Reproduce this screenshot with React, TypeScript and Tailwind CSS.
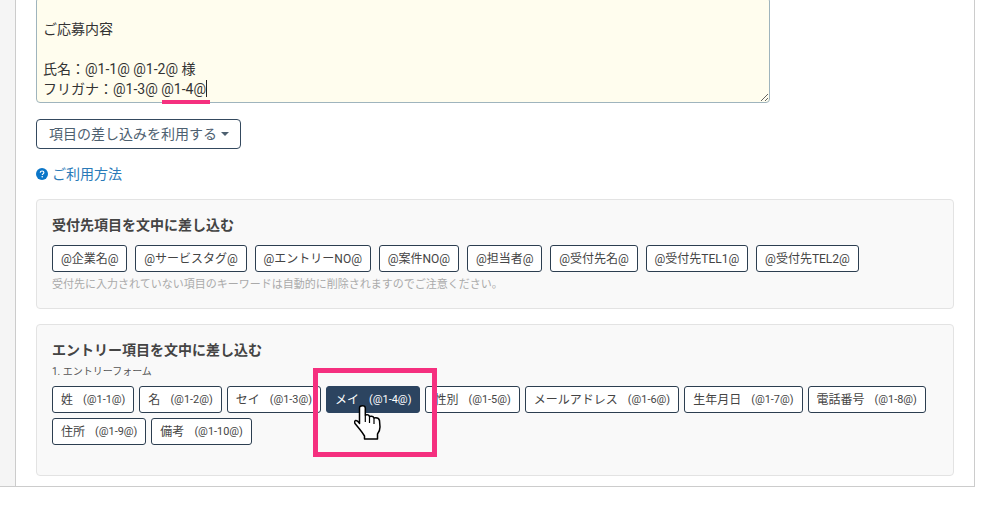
import React from "react";

const font = { fontFamily: '"Roboto","Noto Sans CJK JP",sans-serif' };

const tags = ["@企業名@", "@サービスタグ@", "@エントリーNO@", "@案件NO@", "@担当者@", "@受付先名@", "@受付先TEL1@", "@受付先TEL2@"];
const items: [string, string][] = [
  ["姓", "(@1-1@)"],
  ["名", "(@1-2@)"],
  ["セイ", "(@1-3@)"],
  ["メイ", "(@1-4@)"],
  ["性別", "(@1-5@)"],
  ["メールアドレス", "(@1-6@)"],
  ["生年月日", "(@1-7@)"],
  ["電話番号", "(@1-8@)"],
  ["住所", "(@1-9@)"],
  ["備考", "(@1-10@)"],
];

function Hand() {
  return (
    <svg viewBox="0 0 27 35" className="absolute left-[354px] top-[405px] w-[27px] h-[35px]">
      <path
        d="M5.500 3Q5.500 .8 8.300 .8Q11.300 .8 11.300 3V10Q14.800 9 15.500 11.500Q19 10.500 20 13Q24.500 12 25.500 15.500L26 22Q26 26 23.500 29V34H10.500V31Q8 27 5.500 24L1 18.500Q0 16.500 1.500 15.500Q3.500 15 5.500 18.500Z"
        fill="#fff"
        stroke="#000"
        strokeWidth="1.500"
        strokeLinejoin="round"
      />
      <path d="M11.300 10V17M15.500 11.500V18M20 13V19" stroke="#000" strokeWidth="1.200" fill="none" />
    </svg>
  );
}

export default function App() {
  return (
    <div className="relative w-[990px] h-[505px] overflow-hidden bg-white text-[#333]" style={font}>
      <div className="flex w-[975px] h-[487px] border-b border-[#cccccc]">
        <div className="w-[15px] bg-[#f5f5f5]" />
        <div className="flex-1 border-x border-[#cccccc] bg-white pl-[20px] pr-[20px]">
          <textarea
            readOnly
            className="block w-[734px] h-[106px] -mt-[3px] pl-[6px] pt-[0.500px] border border-[#9fb4bd] rounded-[4px] bg-[#fffdee] text-[14px] leading-[20px] text-[#333] overflow-hidden outline-none"
            value={"\nご応募内容\n\n氏名：@1-1@ @1-2@ 様\nフリガナ：@1-3@ @1-4@"}
          />
          <button className="flex items-center mt-[16px] h-[30px] w-[205px] pl-[12px] border border-[#34495e] rounded-[4px] bg-white text-[14px] text-[#4d6070]">
            項目の差し込みを利用する
            <span className="ml-[4px] w-0 h-0 border-x-[4px] border-x-transparent border-t-[4px] border-t-[#4d6070]" />
          </button>
          <div className="flex items-center gap-[4px] mt-[15px] h-[20px] text-[14px] text-[#2a7ab8]">
            <svg viewBox="0 0 16 16" className="w-[12px] h-[12px]">
              <circle cx="8" cy="8" r="8" fill="#0b76c8" />
              <path d="M5.600 6.200C5.700 4.800 6.700 4 8.100 4c1.400 0 2.400.8 2.400 2 0 1-.6 1.500-1.300 1.900-.6.400-.8.600-.8 1.300" stroke="#fff" strokeWidth="1.600" fill="none" />
              <circle cx="8.300" cy="11.700" r="1.100" fill="#fff" />
            </svg>
            ご利用方法
          </div>
          <section className="mt-[15px] h-[110px] w-[918px] border border-[#e3e3e3] rounded-[4px] bg-[#f9f9f9] px-[15px] pt-[15px]">
            <h3 className="text-[14px] font-bold leading-[20px] text-[#444]">受付先項目を文中に差し込む</h3>
            <div className="flex gap-[8px] mt-[10px]">
              {tags.map((t) => (
                <span key={t} className="flex items-center h-[27px] px-[7.900px] border border-[#2c3e50] rounded-[3px] bg-white text-[12px] text-[#444]">
                  {t}
                </span>
              ))}
            </div>
            <p className="mt-[5px] text-[11px] leading-[16px] text-[#aaaaaa]">受付先に入力されていない項目のキーワードは自動的に削除されますのでご注意ください。</p>
          </section>
          <section className="mt-[15px] h-[152px] w-[918px] border border-[#e3e3e3] rounded-[4px] bg-[#f9f9f9] px-[15px] pt-[15px]">
            <h3 className="text-[14px] font-bold leading-[20px] text-[#444]">エントリー項目を文中に差し込む</h3>
            <p className="mt-[5px] text-[10px] leading-[14px] text-[#555]">1. エントリーフォーム</p>
            <div className="flex flex-wrap gap-[5px] mt-[7px]">
              {items.map(([a, b]) => {
                const active = a === "メイ";
                return (
                  <span
                    key={a}
                    className={
                      active
                        ? "flex items-center h-[27px] px-[8px] pt-[1px] border border-[#2c4460] rounded-[3px] bg-[#2c4460] text-[12px] text-white"
                        : "flex items-center h-[27px] px-[8px] pt-[1px] border border-[#2c3e50] rounded-[3px] bg-white text-[12px] text-[#444]"
                    }
                  >
                    {a}
                    <span className="ml-[10px] text-[10.900px]">{b}</span>
                  </span>
                );
              })}
            </div>
          </section>
        </div>
      </div>
      <div className="absolute left-[206px] top-[80px] w-px h-[17px] bg-[#222]" />
      <div className="absolute left-[162px] top-[100px] w-[48px] h-[4px] bg-[#f5307f]" />
      <div className="absolute left-[313px] top-[368px] w-[124px] h-[89px] border-[5px] border-[#f5307f]" />
      <Hand />
    </div>
  );
}
